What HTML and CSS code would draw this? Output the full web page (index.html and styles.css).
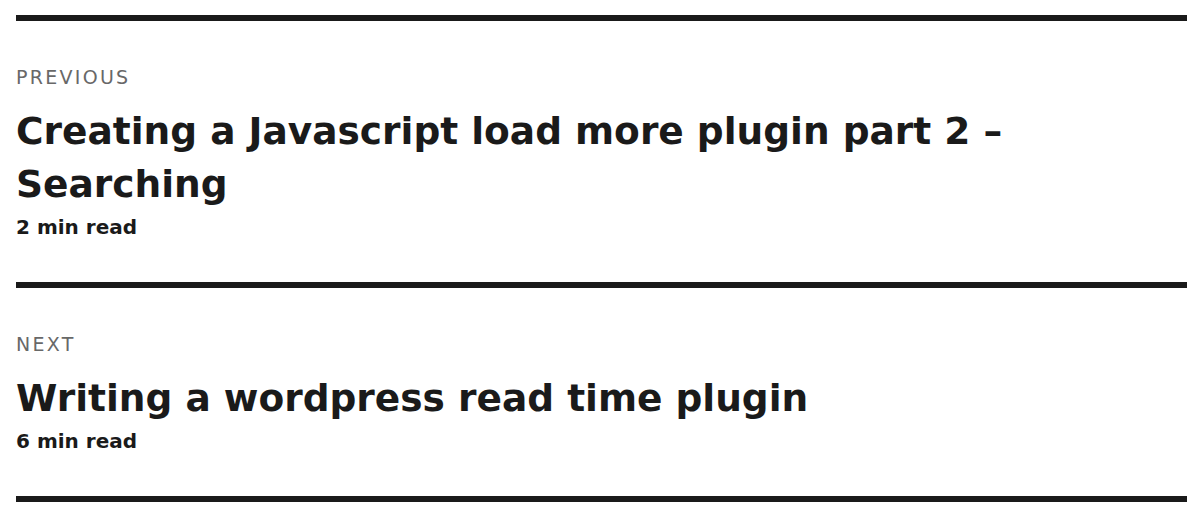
FILE: index.html
```html
<!DOCTYPE html>
<html lang="en">

<head>
    <meta charset="UTF-8">
    <meta name="viewport" content="width=device-width, initial-scale=1.0">
    <title>Post navigation</title>
    <link rel="stylesheet" href="styles.css">
</head>

<body>
    <nav class="post-nav">
        <a class="nav-item" href="#">
            <span class="meta-nav">Previous</span>
            <span class="post-title">Creating a Javascript load more plugin part 2 – Searching</span>
            <span class="read-time">2 min read</span>
        </a>
        <a class="nav-item" href="#">
            <span class="meta-nav">Next</span>
            <span class="post-title">Writing a wordpress read time plugin</span>
            <span class="read-time">6 min read</span>
        </a>
    </nav>
</body>

</html>
```

FILE: styles.css
```css
* {
    box-sizing: border-box;
}

body {
    margin: 0;
    padding: 15px 13px 0 16px;
    background: #fff;
    color: #1a1a1a;
    font-family: "DejaVu Sans", "Noto Sans", sans-serif;
}

.post-nav {
    border-bottom: 6px solid #1a1a1a;
}

.nav-item {
    display: flex;
    flex-direction: column;
    align-items: flex-start;
    border-top: 6px solid #1a1a1a;
    padding: 44px 0 43px;
    color: #1a1a1a;
    text-decoration: none;
}

.meta-nav {
    font-size: 19px;
    line-height: 24px;
    letter-spacing: 0.12em;
    text-transform: uppercase;
    color: #686868;
    margin-bottom: 16px;
}

.post-title {
    font-size: 37.5px;
    line-height: 53px;
    font-weight: 700;
    max-width: 1000px;
}

.read-time {
    font-size: 20px;
    line-height: 24px;
    font-weight: 700;
    margin-top: 4px;
}
```
